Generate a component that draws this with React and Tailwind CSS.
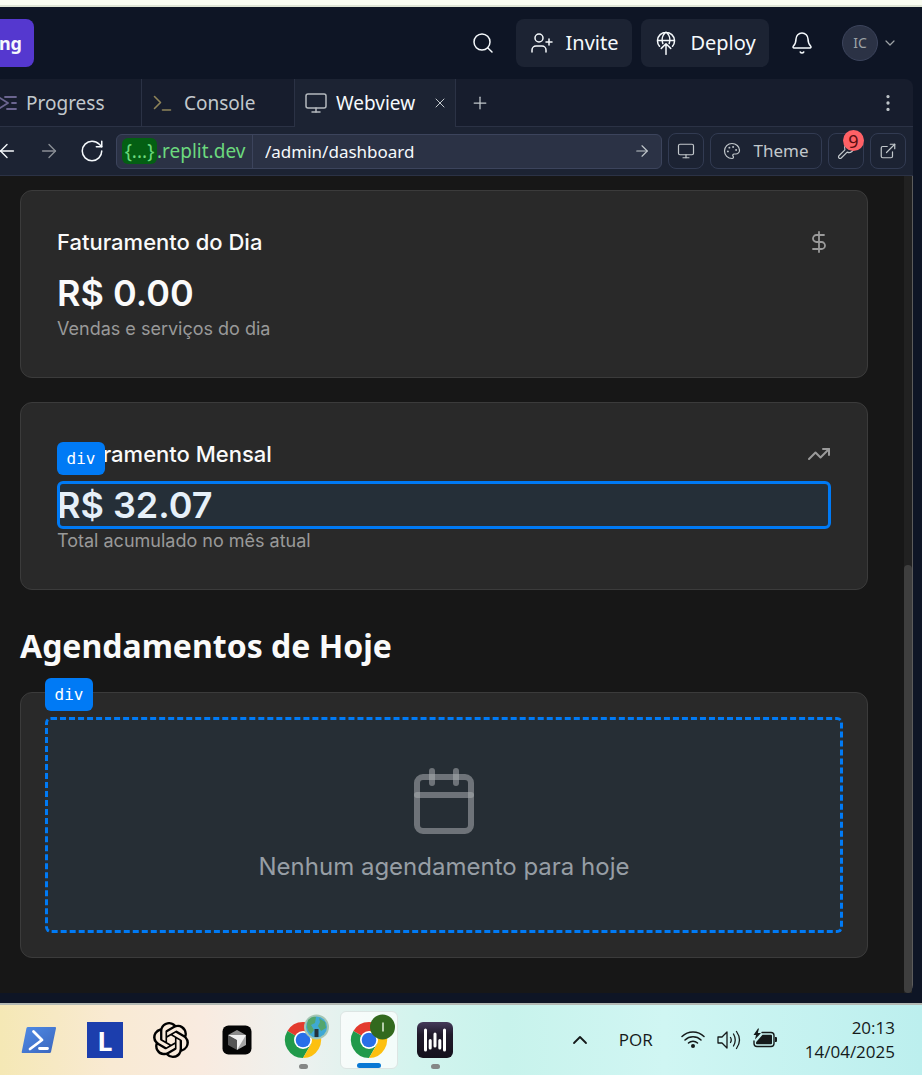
import React from "react";
import { ArrowLeft, ArrowRight, Bell, Calendar, ChevronDown, ChevronUp, DollarSign, EllipsisVertical, ExternalLink, Monitor, Palette, Plus, RotateCw, Search, TrendingUp, UserPlus, Wrench, X } from "lucide-react";
import { SiOpenai } from "react-icons/si";

function DeployIcon() {
  return (
    <svg viewBox="0 0 24 24" className="size-6" fill="none" stroke="currentColor" strokeWidth="1.5" strokeLinecap="round" strokeLinejoin="round" aria-hidden="true">
      <path d="M5.500 15.300a8.500 8.500 0 1 1 13 0M3.500 9.500h17M8.800 12.500C7.300 8 8.800 3.500 12 1.200c3.200 2.300 4.700 6.800 3.200 11.300M12 23.300V12.700M7.300 17.400l4.700-4.700 4.700 4.700" />
    </svg>
  );
}

function ProgressIcon() {
  return (
    <svg viewBox="0 0 18 16" className="h-4 w-[18px] shrink-0 text-[#6b6590]" fill="none" stroke="currentColor" strokeWidth="1.8" strokeLinecap="round" strokeLinejoin="round" aria-hidden="true">
      <path d="M0 3l8 5-8 5M5 2h11M12 8h4M7 14h9" />
    </svg>
  );
}

function ConsoleIcon() {
  return (
    <svg viewBox="0 0 20 18" className="h-[18px] w-5 shrink-0 text-[#8f8459]" fill="none" stroke="currentColor" strokeWidth="1.6" strokeLinecap="round" strokeLinejoin="round" aria-hidden="true">
      <path d="M2.500 2.500l6 6-6 6M10.500 16h8" />
    </svg>
  );
}

function PowerShellIcon() {
  return (
    <svg viewBox="0 0 36 28" className="h-7 w-9" aria-hidden="true">
      <defs>
        <linearGradient id="ps" x1="0" y1="0" x2="1" y2="1">
          <stop offset="0" stopColor="#4f8be6" />
          <stop offset="1" stopColor="#3b66bd" />
        </linearGradient>
      </defs>
      <path d="M7 1h27q1.300 0 1 1.300L30 26q-.3 1-1.300 1H1.500Q.4 27 .7 26L5.500 2Q5.800 1 7 1z" fill="url(#ps)" />
      <path d="M12.500 5.500l8.500 8.500L9 23M18.500 22.500h8" fill="none" stroke="#fff" strokeWidth="2.800" strokeLinecap="round" strokeLinejoin="round" />
    </svg>
  );
}

function CursorIcon() {
  return (
    <svg viewBox="0 0 30 30" className="size-[30px]" aria-hidden="true">
      <rect x=".5" y=".5" width="29" height="29" rx="6" fill="#050505" />
      <path d="M15 5l9 5-9 5-9-5z" fill="#8b8b8b" />
      <path d="M6 10l9 5v10l-9-5z" fill="#555" />
      <path d="M24 10l-9 5v10l9-5z" fill="#a5a5a5" />
      <path d="M6 10h18l-9 15v-10z" fill="#efefef" />
    </svg>
  );
}

function ChromeIcon({ children }) {
  return (
    <svg viewBox="-2 4 48 48" className="size-12 overflow-visible" aria-hidden="true">
      <path d="M22 28L6.400 19A18 18 0 0 1 37.600 19H22z" fill="#e33b2e" />
      <path d="M22 28L6.400 19a18 18 0 0 0 15.600 27l8-14z" fill="#219a4b" />
      <path d="M22 19h15.600A18 18 0 0 1 22 46l7.800-13.500z" fill="#fdc010" />
      <circle cx="22" cy="28" r="9" fill="#fff" />
      <circle cx="22" cy="28" r="7.300" fill="#286fe8" />
      {children}
    </svg>
  );
}

function BarsIcon() {
  return (
    <svg viewBox="0 0 36 36" className="size-9" aria-hidden="true">
      <defs>
        <linearGradient id="bars" x1="0" y1="0" x2="0" y2="1">
          <stop offset="0" stopColor="#453a5a" />
          <stop offset=".35" stopColor="#201a2b" />
          <stop offset="1" stopColor="#15111c" />
        </linearGradient>
      </defs>
      <rect width="36" height="36" rx="6" fill="url(#bars)" />
      <path d="M8.500 8v20M13.200 18.500V26M18 12v12M22.800 18.500V26M27.500 8v20" stroke="#fff" strokeWidth="3" strokeLinecap="round" />
    </svg>
  );
}

function WifiIcon() {
  return (
    <svg viewBox="0 0 24 20" className="h-5 w-6" fill="none" stroke="currentColor" strokeWidth="1.500" strokeLinecap="round" aria-hidden="true">
      <path d="M1 6.500a15.500 15.500 0 0 1 22 0M4 10a11.400 11.400 0 0 1 16 0M7.500 13a6.500 6.500 0 0 1 9 0" />
      <circle cx="12" cy="16" r="2" fill="currentColor" stroke="none" />
    </svg>
  );
}

function VolumeIcon() {
  return (
    <svg viewBox="0 0 24 20" className="h-5 w-6" fill="none" stroke="currentColor" strokeWidth="1.300" strokeLinecap="round" strokeLinejoin="round" aria-hidden="true">
      <path d="M1 7h4l5-5v16l-5-5H1zM13.500 7.500q1.500 2.500 0 5M16.500 4q3.500 6 0 12M19.500 1.500q6 8.500 0 17" />
    </svg>
  );
}

function BatteryIcon() {
  return (
    <svg viewBox="0 0 24 20" className="h-5 w-6 overflow-visible" aria-hidden="true">
      <path d="M9 2.500h9a3 3 0 0 1 3 3v8a3 3 0 0 1-3 3H4a3 3 0 0 1-3-3V11" fill="none" stroke="currentColor" strokeWidth="1.400" strokeLinecap="round" />
      <path d="M9.500 4.800H18q1 0 1 1v7.500q0 1-1 1H4q-1 0-1-1v-1z" fill="currentColor" />
      <path d="M22 7h1q1 0 1 1v3q0 1-1 1h-1z" fill="currentColor" />
      <path d="M5-1.500L.500 5H3L2 9.500l6-6.500H4.800L6-1.500z" fill="currentColor" />
    </svg>
  );
}

function TaskButton({ label, active, running, children }) {
  return (
    <button
      type="button"
      aria-label={label}
      className={
        active
          ? "relative flex h-[58px] w-[58px] items-center justify-center rounded-md border border-[#dce5e3] bg-white/70"
          : "relative flex h-[58px] w-[58px] items-center justify-center rounded-md"
      }
    >
      {children}
      {active && <span className="absolute bottom-0 h-[5px] w-6 rounded-full bg-[#0878d4]" />}
      {running && <span className="absolute bottom-0 h-[5px] w-[9px] rounded-full bg-[#858786]" />}
    </button>
  );
}

function StatCard({ title, value, note, icon, inspected }) {
  return (
    <section className="rounded-xl border border-[#3b3b3b] bg-[#292929] p-9">
      <div className="relative flex h-[30px] items-center justify-between">
        <h2 className="text-[22px] leading-7 font-medium text-[#fafafa]">{title}</h2>
        {icon}
        {inspected && <InspectTag className="absolute top-[3px] left-0" />}
      </div>
      <div className="relative mt-3 flex h-12 items-center">
        <p className="text-4xl leading-[46px] font-semibold text-[#fafafa]">{value}</p>
        {inspected && <span className="absolute inset-0 rounded-md border-3 border-[#007af5] bg-[#007af5]/8" />}
      </div>
      <p className="h-6 text-lg leading-6 text-[#999999]">{note}</p>
    </section>
  );
}

function InspectTag({ className }) {
  return (
    <span className={`${className} flex h-[33px] w-12 items-center justify-center rounded-md bg-[#007af5] font-['DejaVu_Sans_Mono',monospace] text-base text-white`}>
      div
    </span>
  );
}

const toolButton = "relative flex h-9 shrink-0 items-center justify-center rounded-lg border border-[#323b52] text-[#c2c8cc]";

export default function App() {
  return (
    <div className="flex min-h-screen flex-col overflow-x-hidden bg-[#0e1525] font-['Noto_Sans',sans-serif] text-[#f5f9fc]">
      <div className="h-[7px] border-b-2 border-[#dfe5d5] bg-[#f9fcf1]" />

      <header className="flex h-[72px] items-center justify-between pr-6">
        <button type="button" className="flex h-12 w-[34px] items-center justify-end rounded-r-lg bg-[#5538cf] pr-3 text-lg font-bold">ng</button>
        <div className="flex items-center">
          <button type="button" aria-label="Search" className="mr-[21px] flex size-6 items-center justify-center">
            <Search className="size-6" strokeWidth={1.5} />
          </button>
          <button type="button" className="mr-[9px] flex h-12 w-[116px] items-center justify-center gap-3 rounded-lg bg-[#1c2333] text-xl">
            <UserPlus className="size-6" strokeWidth={1.5} />
            Invite
          </button>
          <button type="button" className="flex h-12 w-32 items-center justify-center gap-3 rounded-lg bg-[#1c2333] text-xl">
            <DeployIcon />
            Deploy
          </button>
          <button type="button" aria-label="Notifications" className="mx-[21px] flex size-6 items-center justify-center">
            <Bell className="size-6" strokeWidth={1.5} />
          </button>
          <button type="button" aria-label="Account" className="ml-[7px] flex items-center gap-1 text-[#9da2a6]">
            <span className="flex size-9 items-center justify-center rounded-full border border-[#3c445c] bg-[#2b3245] text-sm">IC</span>
            <ChevronDown className="size-4" strokeWidth={1.8} />
          </button>
        </div>
      </header>

      <main className="mr-[9px] flex grow flex-col rounded-r-lg">
        <div className="flex h-12 rounded-tr-lg bg-[#171d2d] text-[19px] text-[#c2c8cc]">
          <button type="button" className="flex w-[142px] shrink-0 items-center gap-2 border-r border-b border-[#2b3245] pt-px">
            <ProgressIcon />
            Progress
          </button>
          <button type="button" className="flex w-[153px] shrink-0 items-center gap-3 border-r border-b border-[#2b3245] pt-px pl-[10px]">
            <ConsoleIcon />
            Console
          </button>
          <div className="flex w-[161px] shrink-0 items-center border-r border-[#2b3245] bg-[#1c2333] pr-[7px] pl-[9px]">
            <button type="button" className="flex grow items-center gap-2 text-[#f5f9fc]">
              <Monitor className="size-6 text-[#b4b9be]" strokeWidth={1.5} />
              Webview
            </button>
            <button type="button" aria-label="Close tab" className="flex size-4 items-center justify-center">
              <X className="size-4 shrink-0" strokeWidth={1.5} />
            </button>
          </div>
          <div className="flex grow items-center justify-between border-b border-[#2b3245] pr-[14px] pl-[14px]">
            <button type="button" aria-label="New tab"><Plus className="size-5" strokeWidth={1.5} /></button>
            <button type="button" aria-label="More options"><EllipsisVertical className="size-[22px]" strokeWidth={1.6} /></button>
          </div>
        </div>

        <div className="flex h-[49px] items-center gap-[6px] border-b border-[#2b3245] bg-[#1c2333] pr-[7px]">
          <div className="flex w-[110px] shrink-0 items-center">
            <button type="button" aria-label="Back" className="-ml-1 mr-5"><ArrowLeft className="size-[22px]" strokeWidth={1.5} /></button>
            <button type="button" aria-label="Forward" className="mr-[19px] text-[#8a8f96]"><ArrowRight className="size-[22px]" strokeWidth={1.5} /></button>
            <button type="button" aria-label="Reload"><RotateCw className="size-[26px]" strokeWidth={1.4} /></button>
          </div>
          <div className="flex h-[35px] min-w-0 grow items-center rounded-md border border-[#3c445c] bg-[#2b3245]">
            <div className="flex h-full w-[136px] shrink-0 items-center border-r border-[#3c445c] pl-[5px] text-[19px] text-[#6cd97e]">
              <span className="flex h-[26px] w-[35px] items-center justify-center rounded-md bg-[#045f13]">{"{...}"}</span>
              <span>.replit.dev</span>
            </div>
            <input aria-label="Page path" defaultValue="/admin/dashboard" className="h-full min-w-0 grow bg-transparent px-3 text-[17px] text-[#f5f9fc] outline-none" />
            <button type="button" aria-label="Go" className="mr-[10px] text-[#c2c8cc]"><ArrowRight className="size-[18px]" strokeWidth={1.5} /></button>
          </div>
          <button type="button" aria-label="Device size" className={`${toolButton} w-9`}><Monitor className="size-[18px]" strokeWidth={1.6} /></button>
          <button type="button" className={`${toolButton} w-28 gap-3 text-[17px]`}>
            <Palette className="size-[18px]" strokeWidth={1.6} />
            Theme
          </button>
          <button type="button" aria-label="Developer tools, 9 errors" className={`${toolButton} w-9`}>
            <Wrench className="size-[18px]" strokeWidth={1.6} />
            <span className="absolute -top-1 -right-px flex size-[21px] items-center justify-center rounded-full bg-[#ff6166] text-lg leading-none text-[#5a0d10]">9</span>
          </button>
          <button type="button" aria-label="Open in new tab" className={`${toolButton} w-9`}><ExternalLink className="size-[18px]" strokeWidth={1.6} /></button>
        </div>

        <div className="flex grow rounded-br-lg border-r border-[#5c5c5c] bg-[#171717] font-['Inter',sans-serif]">
          <div className="flex min-w-0 grow flex-col pt-[14px] pr-9 pb-[35px] pl-5">
            <div className="flex flex-col gap-6">
              <StatCard title="Faturamento do Dia" value="R$ 0.00" note="Vendas e serviços do dia" icon={<DollarSign className="size-6 text-[#9a9a9a]" strokeWidth={1.8} />} />
              <StatCard title="Faturamento Mensal" value="R$ 32.07" note="Total acumulado no mês atual" icon={<TrendingUp className="size-6 text-[#9a9a9a]" strokeWidth={2} />} inspected />
            </div>
            <h1 className="mt-[35px] mb-[25px] font-['Noto_Sans',sans-serif] text-[32px] leading-[42px] font-bold text-[#fafafa]">Agendamentos de Hoje</h1>
            <section className="relative rounded-xl border border-[#3b3b3b] bg-[#292929] p-6">
              <InspectTag className="absolute -top-[15px] left-6" />
              <div className="flex h-[216px] flex-col items-center rounded-md border-3 border-dashed border-[#007af5] bg-[#262e35] pt-[45px]">
                <Calendar className="size-[72px] text-[#a9adb1]/55" strokeWidth={2} />
                <p className="mt-3 text-2xl leading-9 text-[#979ea5]">Nenhum agendamento para hoje</p>
              </div>
            </section>
          </div>
          <div className="flex w-2 shrink-0 flex-col bg-[#212121]">
            <div className="flex-[389]" />
            <div className="flex-[428] rounded-full bg-[#3e3e3e]" />
          </div>
        </div>
      </main>

      <footer className="mt-[10px] flex h-[72px] items-center justify-between border-t-2 border-[#b3b9b3] bg-[linear-gradient(90deg,#f5e8b5_0%,#f9ead3_12%,#f9ebe0_22%,#eef1ef_32%,#d3f4ee_45%,#c8f3ec_55%,#d0f6f3_72%,#bcefee_100%)] pr-[27px] pl-[10px] text-[#151a1a]">
        <nav aria-label="Taskbar" className="flex gap-2">
          <TaskButton label="PowerShell"><PowerShellIcon /></TaskButton>
          <TaskButton label="L">
            <span className="flex size-9 items-center justify-center bg-[#1c3ead] font-['Open_Sans',sans-serif] text-[27px] leading-none font-bold text-white">L</span>
          </TaskButton>
          <TaskButton label="ChatGPT"><SiOpenai className="size-9 text-black" /></TaskButton>
          <TaskButton label="Cursor"><CursorIcon /></TaskButton>
          <TaskButton label="Chrome" running>
            <ChromeIcon>
              <circle cx="35.500" cy="15" r="12.500" fill="#a5c6b4" />
              <circle cx="35.500" cy="15" r="10.500" fill="#3fa9d4" />
              <path d="M27 8q4-4 8-3l-1 6-4 2 3 5-3 4q-6-5-3-14zM38 6l6 4 1 6-5 3-3-5 2-4z" fill="#54a66d" />
              <path d="M33.500 17h4v8h-4z" fill="#24323b" />
            </ChromeIcon>
          </TaskButton>
          <TaskButton label="Chrome, work profile" active>
            <ChromeIcon>
              <circle cx="35.500" cy="15" r="12.500" fill="#32691e" />
              <path d="M36 10.500v9" stroke="#b5cdaa" strokeWidth="2" />
            </ChromeIcon>
          </TaskButton>
          <TaskButton label="Audio app" running><BarsIcon /></TaskButton>
        </nav>
        <div className="flex items-center font-['Open_Sans',sans-serif] text-[17px]">
          <button type="button" aria-label="Show hidden icons" className="mr-[27px]"><ChevronUp className="size-6" strokeWidth={1.8} /></button>
          <button type="button" className="mr-7">POR</button>
          <button type="button" aria-label="Network, sound and battery" className="mr-7 flex gap-3">
            <WifiIcon />
            <VolumeIcon />
            <BatteryIcon />
          </button>
          <button type="button" className="text-right leading-6">
            <time className="block">20:13</time>
            <time className="block">14/04/2025</time>
          </button>
        </div>
      </footer>
    </div>
  );
}
